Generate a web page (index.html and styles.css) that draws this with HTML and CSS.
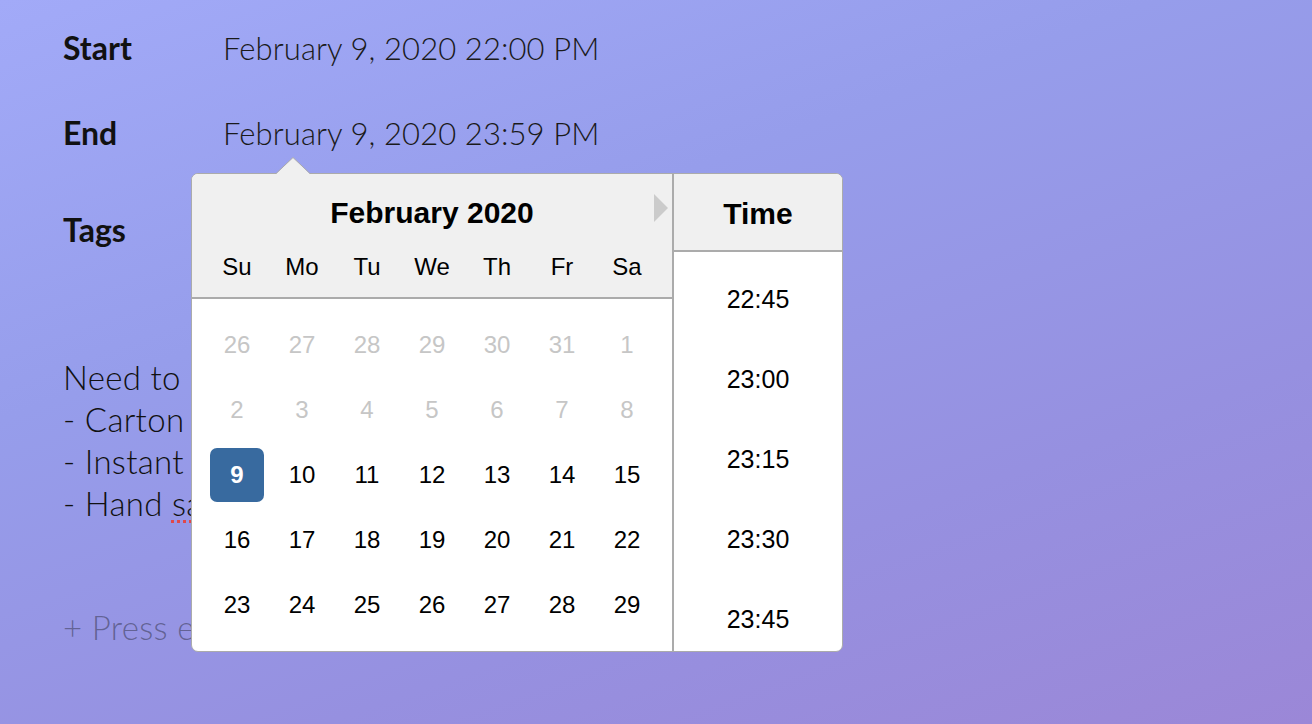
FILE: index.html
```html
<!DOCTYPE html>
<html lang="en">
<head>
<meta charset="utf-8">
<title>Event</title>
<link rel="stylesheet" href="styles.css">
</head>
<body>
<main class="page">
  <section class="form">
    <div class="row row-start">
      <div class="label">Start</div>
      <div class="value">February 9, 2020 22:00 PM</div>
    </div>
    <div class="row row-end">
      <div class="label">End</div>
      <div class="value">February 9, 2020 23:59 PM</div>
    </div>
    <div class="row row-tags">
      <div class="label">Tags</div>
      <div class="value"></div>
    </div>
    <div class="note">
      <div>Need to</div>
      <div>- Carton</div>
      <div>- Instant</div>
      <div>- Hand <span class="misspelled">sa</span></div>
    </div>
    <div class="add-item">+ Press en</div>
  </section>

  <div class="picker">
    <svg class="picker-arrow" width="36" height="18" viewBox="0 0 36 18">
      <polygon points="0,18 18,0.5 36,18" fill="#f0f0f0"/>
      <polyline points="0,17.5 18,0.5 36,17.5" fill="none" stroke="#ababab" stroke-width="1"/>
    </svg>
    <div class="calendar">
      <div class="cal-head">
        <div class="cal-title">February 2020</div>
        <span class="cal-next"></span>
        <div class="cal-weekdays">
          <span>Su</span><span>Mo</span><span>Tu</span><span>We</span><span>Th</span><span>Fr</span><span>Sa</span>
        </div>
      </div>
      <div class="cal-days">
        <span class="muted">26</span><span class="muted">27</span><span class="muted">28</span><span class="muted">29</span><span class="muted">30</span><span class="muted">31</span><span class="muted">1</span>
        <span class="muted">2</span><span class="muted">3</span><span class="muted">4</span><span class="muted">5</span><span class="muted">6</span><span class="muted">7</span><span class="muted">8</span>
        <span><b class="selected">9</b></span><span>10</span><span>11</span><span>12</span><span>13</span><span>14</span><span>15</span>
        <span>16</span><span>17</span><span>18</span><span>19</span><span>20</span><span>21</span><span>22</span>
        <span>23</span><span>24</span><span>25</span><span>26</span><span>27</span><span>28</span><span>29</span>
      </div>
    </div>
    <div class="time">
      <div class="time-head">Time</div>
      <div class="time-list">
        <div class="time-item">22:45</div>
        <div class="time-item">23:00</div>
        <div class="time-item">23:15</div>
        <div class="time-item">23:30</div>
        <div class="time-item">23:45</div>
      </div>
    </div>
  </div>
</main>
</body>
</html>
```

FILE: styles.css
```css
html, body {
  margin: 0;
  padding: 0;
}

body {
  width: 1312px;
  height: 724px;
  overflow: hidden;
  background: linear-gradient(160deg, #a2aaf8 0%, #969deb 35%, #9690e0 70%, #9b87d7 100%);
  font-family: Lato, "Open Sans", sans-serif;
  color: #111;
}

.page {
  position: relative;
  height: 724px;
}

.form {
  padding: 28px 0 0 63px;
}

.row {
  display: grid;
  grid-template-columns: 160px 1fr;
  height: 40px;
  line-height: 40px;
}

.row-start { margin-bottom: 45px; }
.row-end { margin-bottom: 57px; }

.label {
  font-size: 32px;
  font-weight: 700;
  color: #111;
}

.value {
  font-size: 31px;
  font-weight: 300;
  letter-spacing: 0.1px;
  color: #1a1a1a;
}

.note {
  white-space: nowrap;
  margin-top: 106px;
  font-size: 33px;
  font-weight: 300;
  letter-spacing: 0.3px;
  line-height: 42px;
  color: #111;
}

.misspelled {
  text-decoration: underline dotted #e0484a;
  text-decoration-thickness: 3px;
  text-underline-offset: 4px;
}

.add-item {
  white-space: nowrap;
  margin-top: 82px;
  font-size: 33px;
  font-weight: 300;
  letter-spacing: 0.3px;
  line-height: 42px;
  color: rgba(55, 55, 80, 0.55);
}

/* Date picker popover */
.picker {
  position: absolute;
  left: 191px;
  top: 173px;
  width: 650px;
  height: 477px;
  display: flex;
  border: 1px solid #ababab;
  border-radius: 7px;
  background: #fff;
  font-family: "Liberation Sans", Arial, sans-serif;
  color: #000;
}

.picker-arrow {
  position: absolute;
  left: 83px;
  top: -17px;
}

.calendar {
  width: 480px;
  display: flex;
  flex-direction: column;
}

.cal-head {
  position: relative;
  background: #f0f0f0;
  border-bottom: 2px solid #ababab;
  border-top-left-radius: 6px;
  padding: 22px 12.5px 13px;
}

.cal-title {
  text-align: center;
  font-size: 30px;
  font-weight: 700;
  line-height: 34px;
}

.cal-next {
  position: absolute;
  right: 4px;
  top: 20px;
  width: 0;
  height: 0;
  border-top: 14px solid transparent;
  border-bottom: 14px solid transparent;
  border-left: 14px solid #cbcbcb;
}

.cal-weekdays {
  margin-top: 20px;
  display: grid;
  grid-template-columns: repeat(7, 65px);
  font-size: 24px;
  line-height: 34px;
  text-align: center;
}

.cal-days {
  padding: 13px 12.5px 13px;
  display: grid;
  grid-template-columns: repeat(7, 65px);
  grid-auto-rows: 65px;
  font-size: 24px;
  text-align: center;
}

.cal-days span {
  display: flex;
  align-items: center;
  justify-content: center;
}

.cal-days .muted {
  color: #c6c6c6;
}

.selected {
  width: 54px;
  height: 54px;
  border-radius: 7px;
  background: #386a9f;
  color: #fff;
  font-weight: 700;
  display: flex;
  align-items: center;
  justify-content: center;
}

.time {
  width: 168px;
  border-left: 2px solid #ababab;
  display: flex;
  flex-direction: column;
  overflow: hidden;
}

.time-head {
  height: 73px;
  padding-top: 3px;
  flex: none;
  background: #f0f0f0;
  border-bottom: 2px solid #ababab;
  border-top-right-radius: 6px;
  display: flex;
  align-items: center;
  justify-content: center;
  font-size: 30px;
  font-weight: 700;
}

.time-list {
  padding-top: 7px;
  overflow: hidden;
}

.time-item {
  height: 80px;
  display: flex;
  align-items: center;
  justify-content: center;
  font-size: 25px;
}
```
